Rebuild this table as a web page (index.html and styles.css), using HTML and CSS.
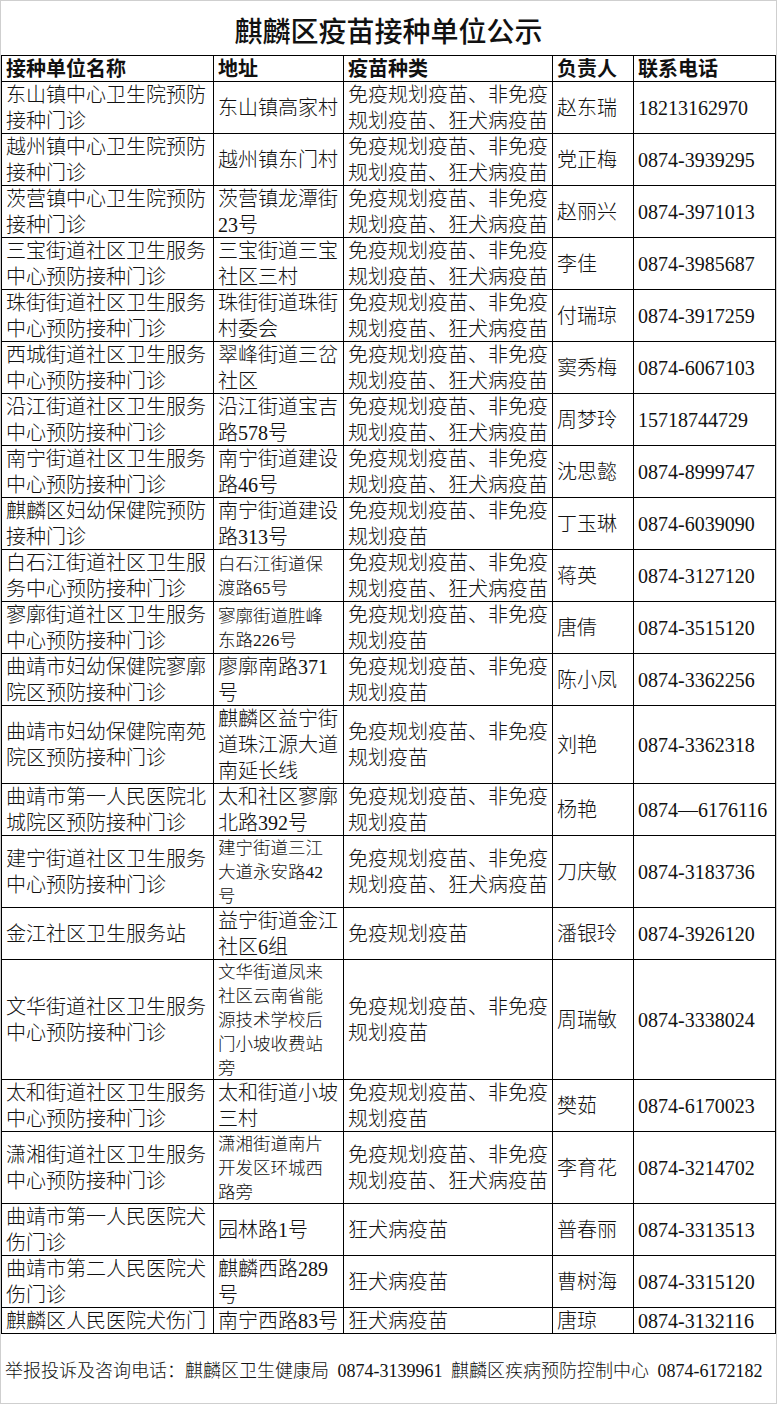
FILE: index.html
```html
<!DOCTYPE html>
<html lang="zh-CN">
<head>
<meta charset="utf-8">
<title>麒麟区疫苗接种单位公示</title>
<link rel="stylesheet" href="styles.css">
</head>
<body>
<div class="page">
  <h1 class="title">麒麟区疫苗接种单位公示</h1>
  <div class="table">
    <div class="row head h26">
      <div class="cell">接种单位名称</div>
      <div class="cell">地址</div>
      <div class="cell">疫苗种类</div>
      <div class="cell">负责人</div>
      <div class="cell">联系电话</div>
    </div>
    <div class="row h52">
      <div class="cell">东山镇中心卫生院预防<br>接种门诊</div>
      <div class="cell">东山镇高家村</div>
      <div class="cell">免疫规划疫苗、非免疫<br>规划疫苗、狂犬病疫苗</div>
      <div class="cell">赵东瑞</div>
      <div class="cell">18213162970</div>
    </div>
    <div class="row h52">
      <div class="cell">越州镇中心卫生院预防<br>接种门诊</div>
      <div class="cell">越州镇东门村</div>
      <div class="cell">免疫规划疫苗、非免疫<br>规划疫苗、狂犬病疫苗</div>
      <div class="cell">党正梅</div>
      <div class="cell">0874-3939295</div>
    </div>
    <div class="row h52">
      <div class="cell">茨营镇中心卫生院预防<br>接种门诊</div>
      <div class="cell">茨营镇龙潭街<br>23号</div>
      <div class="cell">免疫规划疫苗、非免疫<br>规划疫苗、狂犬病疫苗</div>
      <div class="cell">赵丽兴</div>
      <div class="cell">0874-3971013</div>
    </div>
    <div class="row h52">
      <div class="cell">三宝街道社区卫生服务<br>中心预防接种门诊</div>
      <div class="cell">三宝街道三宝<br>社区三村</div>
      <div class="cell">免疫规划疫苗、非免疫<br>规划疫苗、狂犬病疫苗</div>
      <div class="cell">李佳</div>
      <div class="cell">0874-3985687</div>
    </div>
    <div class="row h52">
      <div class="cell">珠街街道社区卫生服务<br>中心预防接种门诊</div>
      <div class="cell">珠街街道珠街<br>村委会</div>
      <div class="cell">免疫规划疫苗、非免疫<br>规划疫苗、狂犬病疫苗</div>
      <div class="cell">付瑞琼</div>
      <div class="cell">0874-3917259</div>
    </div>
    <div class="row h52">
      <div class="cell">西城街道社区卫生服务<br>中心预防接种门诊</div>
      <div class="cell">翠峰街道三岔<br>社区</div>
      <div class="cell">免疫规划疫苗、非免疫<br>规划疫苗、狂犬病疫苗</div>
      <div class="cell">窦秀梅</div>
      <div class="cell">0874-6067103</div>
    </div>
    <div class="row h52">
      <div class="cell">沿江街道社区卫生服务<br>中心预防接种门诊</div>
      <div class="cell">沿江街道宝吉<br>路578号</div>
      <div class="cell">免疫规划疫苗、非免疫<br>规划疫苗、狂犬病疫苗</div>
      <div class="cell">周梦玲</div>
      <div class="cell">15718744729</div>
    </div>
    <div class="row h52">
      <div class="cell">南宁街道社区卫生服务<br>中心预防接种门诊</div>
      <div class="cell">南宁街道建设<br>路46号</div>
      <div class="cell">免疫规划疫苗、非免疫<br>规划疫苗、狂犬病疫苗</div>
      <div class="cell">沈思懿</div>
      <div class="cell">0874-8999747</div>
    </div>
    <div class="row h52">
      <div class="cell">麒麟区妇幼保健院预防<br>接种门诊</div>
      <div class="cell">南宁街道建设<br>路313号</div>
      <div class="cell">免疫规划疫苗、非免疫<br>规划疫苗</div>
      <div class="cell">丁玉琳</div>
      <div class="cell">0874-6039090</div>
    </div>
    <div class="row h52">
      <div class="cell">白石江街道社区卫生服<br>务中心预防接种门诊</div>
      <div class="cell small">白石江街道保<br>渡路65号</div>
      <div class="cell">免疫规划疫苗、非免疫<br>规划疫苗、狂犬病疫苗</div>
      <div class="cell">蒋英</div>
      <div class="cell">0874-3127120</div>
    </div>
    <div class="row h52">
      <div class="cell">寥廓街道社区卫生服务<br>中心预防接种门诊</div>
      <div class="cell small">寥廓街道胜峰<br>东路226号</div>
      <div class="cell">免疫规划疫苗、非免疫<br>规划疫苗</div>
      <div class="cell">唐倩</div>
      <div class="cell">0874-3515120</div>
    </div>
    <div class="row h52">
      <div class="cell">曲靖市妇幼保健院寥廓<br>院区预防接种门诊</div>
      <div class="cell">廖廓南路371<br>号</div>
      <div class="cell">免疫规划疫苗、非免疫<br>规划疫苗</div>
      <div class="cell">陈小凤</div>
      <div class="cell">0874-3362256</div>
    </div>
    <div class="row h78">
      <div class="cell">曲靖市妇幼保健院南苑<br>院区预防接种门诊</div>
      <div class="cell">麒麟区益宁街<br>道珠江源大道<br>南延长线</div>
      <div class="cell">免疫规划疫苗、非免疫<br>规划疫苗</div>
      <div class="cell">刘艳</div>
      <div class="cell">0874-3362318</div>
    </div>
    <div class="row h52">
      <div class="cell">曲靖市第一人民医院北<br>城院区预防接种门诊</div>
      <div class="cell">太和社区寥廓<br>北路392号</div>
      <div class="cell">免疫规划疫苗、非免疫<br>规划疫苗</div>
      <div class="cell">杨艳</div>
      <div class="cell">0874—6176116</div>
    </div>
    <div class="row h72">
      <div class="cell">建宁街道社区卫生服务<br>中心预防接种门诊</div>
      <div class="cell small">建宁街道三江<br>大道永安路42<br>号</div>
      <div class="cell">免疫规划疫苗、非免疫<br>规划疫苗、狂犬病疫苗</div>
      <div class="cell">刀庆敏</div>
      <div class="cell">0874-3183736</div>
    </div>
    <div class="row h52">
      <div class="cell">金江社区卫生服务站</div>
      <div class="cell">益宁街道金江<br>社区6组</div>
      <div class="cell">免疫规划疫苗</div>
      <div class="cell">潘银玲</div>
      <div class="cell">0874-3926120</div>
    </div>
    <div class="row h120">
      <div class="cell">文华街道社区卫生服务<br>中心预防接种门诊</div>
      <div class="cell small">文华街道凤来<br>社区云南省能<br>源技术学校后<br>门小坡收费站<br>旁</div>
      <div class="cell">免疫规划疫苗、非免疫<br>规划疫苗</div>
      <div class="cell">周瑞敏</div>
      <div class="cell">0874-3338024</div>
    </div>
    <div class="row h52">
      <div class="cell">太和街道社区卫生服务<br>中心预防接种门诊</div>
      <div class="cell">太和街道小坡<br>三村</div>
      <div class="cell">免疫规划疫苗、非免疫<br>规划疫苗</div>
      <div class="cell">樊茹</div>
      <div class="cell">0874-6170023</div>
    </div>
    <div class="row h72">
      <div class="cell">潇湘街道社区卫生服务<br>中心预防接种门诊</div>
      <div class="cell small">潇湘街道南片<br>开发区环城西<br>路旁</div>
      <div class="cell">免疫规划疫苗、非免疫<br>规划疫苗、狂犬病疫苗</div>
      <div class="cell">李育花</div>
      <div class="cell">0874-3214702</div>
    </div>
    <div class="row h52">
      <div class="cell">曲靖市第一人民医院犬<br>伤门诊</div>
      <div class="cell">园林路1号</div>
      <div class="cell">狂犬病疫苗</div>
      <div class="cell">普春丽</div>
      <div class="cell">0874-3313513</div>
    </div>
    <div class="row h52">
      <div class="cell">曲靖市第二人民医院犬<br>伤门诊</div>
      <div class="cell">麒麟西路289<br>号</div>
      <div class="cell">狂犬病疫苗</div>
      <div class="cell">曹树海</div>
      <div class="cell">0874-3315120</div>
    </div>
    <div class="row h26">
      <div class="cell">麒麟区人民医院犬伤门</div>
      <div class="cell">南宁西路83号</div>
      <div class="cell">狂犬病疫苗</div>
      <div class="cell">唐琼</div>
      <div class="cell">0874-3132116</div>
    </div>
  </div>
  <p class="footer">举报投诉及咨询电话：麒麟区卫生健康局 0874-3139961 麒麟区疾病预防控制中心 0874-6172182</p>
</div>
</body>
</html>
```

FILE: styles.css
```css
* {
  box-sizing: border-box;
}

body {
  margin: 0;
  background: #ffffff;
}

.page {
  width: 777px;
  height: 1404px;
  border: 1px solid #cfcfcf;
  display: flex;
  flex-direction: column;
  font-family: "Liberation Serif", "Noto Sans CJK SC", serif;
  font-weight: 300;
  color: #111111;
  background: #ffffff;
}

.title {
  margin: 0;
  height: 54px;
  padding-top: 4px;
  line-height: 50px;
  text-align: center;
  font-family: "Noto Sans CJK SC", sans-serif;
  font-size: 28px;
  font-weight: 500;
  color: #111111;
}

.table {
  border-top: 1px solid #000000;
  border-left: 1px solid #000000;
}

.row {
  display: grid;
  grid-template-columns: 212px 130px 209px 81px 1fr;
}

.h26 { height: 26px; }
.h52 { height: 52px; }
.h72 { height: 72px; }
.h78 { height: 78px; }
.h120 { height: 120px; }

.cell {
  display: flex;
  align-items: center;
  padding-left: 4px;
  border-right: 1px solid #000000;
  border-bottom: 1px solid #000000;
  font-size: 20px;
  line-height: 26px;
  white-space: nowrap;
  overflow: hidden;
}

.head .cell {
  font-weight: 700;
}

.cell.small {
  font-size: 17.5px;
  line-height: 24px;
}

.footer {
  margin: 0;
  flex: 1;
  display: flex;
  align-items: center;
  padding-left: 4px;
  font-size: 18px;
  word-spacing: 4px;
  white-space: nowrap;
}
```
